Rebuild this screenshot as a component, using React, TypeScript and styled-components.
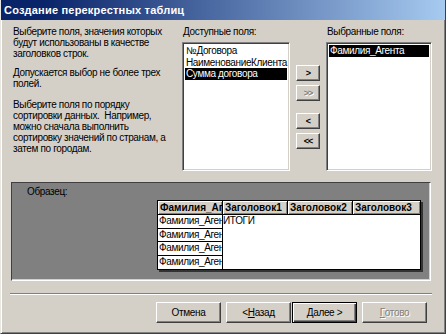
import React from 'react';
import styled, { createGlobalStyle } from 'styled-components';

const GlobalStyle = createGlobalStyle`
  html, body {
    margin: 0;
    padding: 0;
    background: #d4d0c8;
  }
  body {
    font-family: "Liberation Sans", Arial, sans-serif;
    font-size: 10px;
    letter-spacing: -0.35px;
    color: #000;
  }
`;

// Окно мастера
const Window = styled.div`
  width: 446px;
  height: 334px;
  box-sizing: border-box;
  background: #d4d0c8;
  border: 1px solid;
  border-top: 0;
  border-color: #d4d0c8 #404040 #404040 #e8e6e0;
  box-shadow: inset 1px 0 #fff, inset -1px -1px #808080;
  padding: 0 2px 2px 2px;
  display: flex;
  flex-direction: column;
  overflow: hidden;
`;

const TitleBar = styled.div`
  height: 20px;
  margin: 0 -2px 0 -3px;
  padding-left: 4px;
  display: flex;
  align-items: center;
  background: linear-gradient(to right, #0a246a 10%, #a6caf0);
  color: #fff;
  font-weight: bold;
  font-size: 11px;
  letter-spacing: 0.2px;
`;

const TopSection = styled.div`
  display: flex;
  margin-top: 6px;
  height: 145px;
`;

const Hint = styled.div`
  width: 165px;
  margin-left: 10px;
`;

const Paragraph = styled.p<{ $after?: number }>`
  margin: 0 0 ${p => p.$after ?? 0}px 0;
  line-height: 11px;
`;

const FieldColumn = styled.div<{ $left: number; $width: number }>`
  margin-left: ${p => p.$left}px;
  width: ${p => p.$width}px;
  display: flex;
  flex-direction: column;
`;

const FieldLabel = styled.div`
  height: 16px;
  line-height: 11px;
  padding-left: 1px;
`;

const ListBox = styled.div`
  flex: 1;
  background: #fff;
  border: 1px solid;
  border-color: #808080 #fff #fff #808080;
  box-shadow: inset 1px 1px #404040, inset -1px -1px #d4d0c8;
  padding: 2px 2px 0 2px;
  overflow: hidden;
`;

const ListItem = styled.div<{ $selected?: boolean }>`
  height: 11.5px;
  line-height: 11.5px;
  padding-left: 1px;
  white-space: nowrap;
  background: ${p => (p.$selected ? '#000' : 'transparent')};
  color: ${p => (p.$selected ? '#fff' : '#000')};
`;

const MoveButtons = styled.div`
  margin-left: 6px;
  width: 24px;
  padding-top: 39px;
  display: flex;
  flex-direction: column;
`;

const MoveButton = styled.div<{ $gap?: number; $disabled?: boolean }>`
  box-sizing: border-box;
  height: 16px;
  margin-top: ${p => p.$gap ?? 0}px;
  border: 1px solid;
  border-color: #fff #404040 #404040 #fff;
  box-shadow: inset -1px -1px #808080;
  display: flex;
  align-items: center;
  justify-content: center;
  font-size: 9px;
  font-weight: bold;
  letter-spacing: -1px;
  color: ${p => (p.$disabled ? '#808080' : '#000')};
  text-shadow: ${p => (p.$disabled ? '1px 1px #fff' : 'none')};
`;

// Образец таблицы
const Sample = styled.div`
  margin: 11px 0 0 8px;
  width: 420px;
  height: 99px;
  box-sizing: border-box;
  background: #808080;
  border: 1px solid;
  border-color: #404040 #fff #fff #404040;
  box-shadow: inset -1px -1px #d4d0c8;
  padding-top: 3px;
`;

const SampleLabel = styled.div`
  margin-left: 15px;
  line-height: 11px;
  color: #000;
`;

const Table = styled.div`
  margin: 3px 0 0 145px;
  width: 262px;
  border: 1px solid #000;
  box-shadow: 2px 2px 0 #333;
  background: #fff;
`;

const HeaderRow = styled.div`
  display: grid;
  grid-template-columns: 65px 65px 65px 1fr;
  height: 14px;
`;

const HeaderCell = styled.div`
  background: #d4d0c8;
  border-right: 1px solid #000;
  border-bottom: 1px solid #000;
  box-shadow: inset 1px 1px #fff, inset -1px -1px #808080;
  font-weight: bold;
  letter-spacing: 0;
  line-height: 13px;
  padding-left: 2px;
  overflow: hidden;
  white-space: nowrap;

  &:last-child {
    border-right: 0;
  }
`;

const BodyRow = styled.div`
  display: flex;
`;

const RowHeads = styled.div`
  width: 65px;
  display: flex;
  flex-direction: column;
`;

const RowHeadCell = styled.div`
  height: 13.5px;
  box-sizing: border-box;
  border-right: 1px solid #000;
  border-bottom: 1px solid #000;
  line-height: 12px;
  padding-left: 1px;
  overflow: hidden;
  white-space: nowrap;

  &:last-child {
    border-bottom: 0;
  }
`;

const TotalsArea = styled.div`
  flex: 1;
  line-height: 12px;
`;

const Separator = styled.div`
  margin: 12px 0 0 7px;
  width: 422px;
  border-top: 1px solid #808080;
  border-bottom: 1px solid #fff;
`;

const ButtonBar = styled.div`
  display: flex;
  justify-content: flex-end;
  padding-right: 16px;
  margin-top: 7px;
`;

const DialogButton = styled.div<{ $gap?: number; $default?: boolean; $disabled?: boolean }>`
  box-sizing: border-box;
  width: 65px;
  height: 21px;
  margin-left: ${p => p.$gap ?? 0}px;
  border: 1px solid;
  border-color: ${p => (p.$default ? '#000' : '#fff #404040 #404040 #fff')};
  box-shadow: ${p =>
    p.$default
      ? 'inset 1px 1px #fff, inset -1px -1px #404040, inset -2px -2px #808080'
      : 'inset -1px -1px #808080'};
  display: flex;
  align-items: center;
  justify-content: center;
  color: ${p => (p.$disabled ? '#808080' : '#000')};
  text-shadow: ${p => (p.$disabled ? '1px 1px #fff' : 'none')};

  u {
    text-decoration: underline;
  }
`;

const rows = ['Фамилия_Агент', 'Фамилия_Агент', 'Фамилия_Агент', 'Фамилия_Агент'];

export default function App() {
  return (
    <>
      <GlobalStyle />
      <Window>
        <TitleBar>Создание перекрестных таблиц</TitleBar>

        <TopSection>
          <Hint>
            <Paragraph $after={8}>
              Выберите поля, значения которых<br />
              будут использованы в качестве<br />
              заголовков строк.
            </Paragraph>
            <Paragraph $after={10}>
              Допускается выбор не более трех<br />
              полей.
            </Paragraph>
            <Paragraph>
              Выберите поля по порядку<br />
              сортировки данных.&nbsp; Например,<br />
              можно сначала выполнить<br />
              сортировку значений по странам, а<br />
              затем по городам.
            </Paragraph>
          </Hint>

          <FieldColumn $left={4} $width={108}>
            <FieldLabel>Доступные поля:</FieldLabel>
            <ListBox>
              <ListItem>№Договора</ListItem>
              <ListItem>НаименованиеКлиента</ListItem>
              <ListItem $selected>Сумма договора</ListItem>
            </ListBox>
          </FieldColumn>

          <MoveButtons>
            <MoveButton>&gt;</MoveButton>
            <MoveButton $gap={4} $disabled>&gt;&gt;</MoveButton>
            <MoveButton $gap={12}>&lt;</MoveButton>
            <MoveButton $gap={4}>&lt;&lt;</MoveButton>
          </MoveButtons>

          <FieldColumn $left={6} $width={106}>
            <FieldLabel>Выбранные поля:</FieldLabel>
            <ListBox>
              <ListItem $selected>Фамилия_Агента</ListItem>
            </ListBox>
          </FieldColumn>
        </TopSection>

        <Sample>
          <SampleLabel>Образец:</SampleLabel>
          <Table>
            <HeaderRow>
              <HeaderCell>Фамилия_Агента</HeaderCell>
              <HeaderCell>Заголовок1</HeaderCell>
              <HeaderCell>Заголовок2</HeaderCell>
              <HeaderCell>Заголовок3</HeaderCell>
            </HeaderRow>
            <BodyRow>
              <RowHeads>
                {rows.map((r, i) => (
                  <RowHeadCell key={i}>{r}</RowHeadCell>
                ))}
              </RowHeads>
              <TotalsArea>ИТОГИ</TotalsArea>
            </BodyRow>
          </Table>
        </Sample>

        <Separator />

        <ButtonBar>
          <DialogButton>Отмена</DialogButton>
          <DialogButton $gap={5}>&lt; <u>Н</u>азад</DialogButton>
          <DialogButton $gap={1} $default><u>Д</u>алее &gt;</DialogButton>
          <DialogButton $gap={5} $disabled><u>Г</u>отово</DialogButton>
        </ButtonBar>
      </Window>
    </>
  );
}
